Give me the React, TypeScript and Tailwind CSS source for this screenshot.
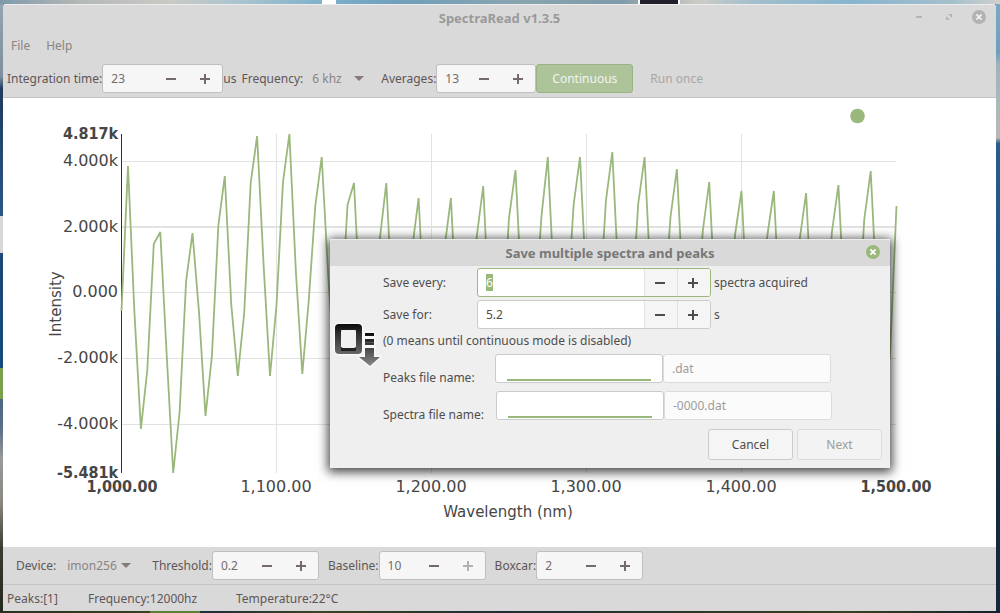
import { useEffect, useRef } from "react";

type SpinProps = {
  id: string;
  value: string;
  width: string;
  maxed?: boolean;
};

function Minus() {
  return (
    <svg width="10" height="10" viewBox="0 0 10 10" aria-hidden="true">
      <rect x="0" y="4" width="10" height="2" fill="currentColor" />
    </svg>
  );
}

function Plus() {
  return (
    <svg width="10" height="10" viewBox="0 0 10 10" aria-hidden="true">
      <path d="M4 0h2v4h4v2H6v4H4V6H0V4h4z" fill="currentColor" />
    </svg>
  );
}

function Arrow() {
  return (
    <svg width="10" height="5" viewBox="0 0 10 5" aria-hidden="true" className="pointer-events-none -ml-[14px] shrink-0">
      <path d="M0 0h10L5 5z" fill="#857b7b" />
    </svg>
  );
}

function Spin({ id, value, width, maxed }: SpinProps) {
  return (
    <div className={`flex h-[29px] shrink-0 overflow-hidden rounded-[3px] border border-[#bfbfbf] bg-[#f6f6f6] ${width}`}>
      <input id={id} type="text" defaultValue={value} className="w-0 min-w-0 flex-1 bg-transparent pl-2 text-[#756a6a] outline-none" />
      <button type="button" aria-label="Decrease" className="flex w-[34px] items-center justify-center text-[#756a6a]">
        <Minus />
      </button>
      <button
        type="button"
        aria-label="Increase"
        disabled={maxed}
        className="flex w-[34px] items-center justify-center text-[#756a6a] disabled:text-[#b5b0b0]"
      >
        <Plus />
      </button>
    </div>
  );
}

function DialogSpin({ id, value, active }: { id: string; value: string; active?: boolean }) {
  const ref = useRef<HTMLInputElement>(null);
  useEffect(() => {
    if (active) {
      ref.current?.focus();
      ref.current?.select();
    }
  }, [active]);
  return (
    <div
      className={`flex h-[29px] w-[234px] overflow-hidden rounded-[3px] border bg-white ${active ? "border-[#9ab87c]" : "border-[#cbcbcb]"}`}
    >
      <input
        ref={ref}
        id={id}
        type="text"
        defaultValue={value}
        className="w-0 min-w-0 flex-1 bg-transparent pl-2 text-[#4d4d4d] outline-none selection:bg-[#9ab87c] selection:text-white"
      />
      <button type="button" aria-label="Decrease" className="flex w-[33px] items-center justify-center border-l border-[#e2e2e2] bg-[#f5f5f5] pr-[2px]">
        <Minus />
      </button>
      <button type="button" aria-label="Increase" className="flex w-[33px] items-center justify-center border-l border-[#e2e2e2] bg-[#f5f5f5] pr-[2px]">
        <Plus />
      </button>
    </div>
  );
}

function CloseIcon({ fill, cross }: { fill: string; cross: string }) {
  return (
    <svg width="14" height="14" viewBox="0 0 14 14" aria-hidden="true">
      <circle cx="7" cy="7" r="7" fill={fill} />
      <path d="M4.4 4.4l5.2 5.2M9.6 4.4l-5.2 5.2" stroke={cross} strokeWidth="1.8" />
    </svg>
  );
}

/* Five samples per fringe, from 1,000 nm to 1,500 nm, as plot heights. */
const SAMPLES = [
  311, 166, 312, 429, 370,
  244, 232, 355, 473, 412,
  281, 233, 312, 416, 356,
  225, 176, 305, 376, 313,
  183, 136, 265, 376, 305,
  182, 134, 272, 374, 300,
  206, 157, 275, 370, 320,
  205, 183, 313, 360, 330,
  239, 183, 313, 360, 340,
  249, 198, 325, 360, 340,
  249, 198, 325, 360, 340,
  237, 186, 320, 360, 330,
  218, 170, 300, 360, 320,
  218, 157, 290, 360, 310,
  205, 157, 290, 360, 310,
  201, 152, 285, 360, 310,
  204, 157, 290, 360, 310,
  217, 169, 300, 360, 320,
  231, 182, 310, 360, 330,
  235, 191, 320, 360, 330,
  236, 191, 320, 360, 330,
  240, 193, 320, 360, 330,
  232, 185, 310, 360, 330,
  220, 171, 300, 400, 355,
  206,
];

const STEP = 775 / 120;
const POINTS = SAMPLES.map((y, i) => `${(121.5 + i * STEP).toFixed(1)},${y}`).join(" ");

const Y_TICKS: [number, string][] = [
  [161, "4.000k"],
  [227, "2.000k"],
  [292, "0.000"],
  [358, "-2.000k"],
  [424, "-4.000k"],
];
const X_TICKS: [number, string][] = [
  [276, "1,100.00"],
  [431, "1,200.00"],
  [586, "1,300.00"],
  [741, "1,400.00"],
];

function Chart() {
  return (
    <svg viewBox="3 98 993 448" className="block h-auto w-full" role="img" aria-label="Spectrum">
      <g fill="#e2e2e2">
        {Y_TICKS.map(([y]) => (
          <rect key={y} x="122" y={y === 227 ? 226 : y} width="774" height={y === 227 ? 2 : 1} />
        ))}
        {X_TICKS.map(([x]) => (
          <rect key={x} x={x} y="134" width="1" height="339" />
        ))}
      </g>
      <rect x="121" y="134" width="1" height="339" fill="#303030" />
      <polyline points={POINTS} fill="none" stroke="#9ab87c" strokeWidth="1.8" strokeLinejoin="bevel" />
      <circle cx="857.5" cy="116" r="7.3" fill="#9ab87c" />
      <g fill="#464646" fontSize="16" className="font-['DejaVu_Sans',sans-serif]">
        {Y_TICKS.map(([y, label]) => (
          <text key={label} x="118" y={y + 5} textAnchor="end">
            {label}
          </text>
        ))}
        {X_TICKS.map(([x, label]) => (
          <text key={label} x={x} y="492" textAnchor="middle">
            {label}
          </text>
        ))}
        <text x="508" y="517" fontSize="15" textAnchor="middle">
          Wavelength (nm)
        </text>
        <text transform="translate(61 304) rotate(-90)" fontSize="15" textAnchor="middle">
          Intensity
        </text>
      </g>
      <g fill="#464646" fontSize="16" fontWeight="700" className="font-['DejaVu_Sans_Condensed','DejaVu_Sans',sans-serif]">
        <text x="118" y="139" textAnchor="end">4.817k</text>
        <text x="118" y="478" textAnchor="end">-5.481k</text>
        <text x="122" y="492" textAnchor="middle">1,000.00</text>
        <text x="896" y="492" textAnchor="middle">1,500.00</text>
      </g>
    </svg>
  );
}

function SaveIcon() {
  return (
    <svg width="48" height="48" viewBox="0 0 48 48" aria-hidden="true">
      <defs>
        <linearGradient id="ink" x1="0" y1="3" x2="0" y2="36" gradientUnits="userSpaceOnUse">
          <stop offset="0" stopColor="#0c0c0c" />
          <stop offset="0.3" stopColor="#2e2e2e" />
          <stop offset="1" stopColor="#707070" />
        </linearGradient>
        <linearGradient id="ink2" x1="0" y1="12" x2="0" y2="45" gradientUnits="userSpaceOnUse">
          <stop offset="0" stopColor="#0c0c0c" />
          <stop offset="1" stopColor="#8a8a8a" />
        </linearGradient>
      </defs>
      <g stroke="#f9f9f9" strokeWidth="3" strokeLinejoin="round" fill="#f9f9f9">
        <rect x="2" y="3" width="27" height="30" rx="4" />
        <path d="M32 12h9v24h6L37 45 26 36h6z" />
      </g>
      <rect x="2" y="3" width="27" height="30" rx="4" fill="url(#ink)" />
      <rect x="8" y="9" width="15" height="21" rx="1" fill="#222" />
      <path d="M8 10q0-1 1-1h13q1 0 1 1v16l-2 1H10l-2-1z" fill="#f1f1f1" />
      <path d="M32 12h9v3h-9zM32 18h9v6h-9zM32 27h9v9h6L37 45 26 36h6z" fill="url(#ink2)" />
      <path d="M32 21h9v1h-9z" fill="#555" />
    </svg>
  );
}

function FileRow({ id, label, suffix, labelWidth }: { id: string; label: string; suffix: string; labelWidth: string }) {
  return (
    <div className="flex h-[29px]">
      <label htmlFor={id} className={`shrink-0 pt-[15px] ${labelWidth}`}>
        {label}
      </label>
      <div className="relative h-[29px] w-[168px]">
        <input id={id} type="text" className="h-full w-full rounded-[3px] border border-[#cbcbcb] bg-white px-2 outline-none" />
        <span className="absolute bottom-[2px] left-3 h-[2px] w-36 bg-[#9ab87c]" />
      </div>
      <input
        type="text"
        aria-label={`${label} suffix`}
        defaultValue={suffix}
        disabled
        className="h-full w-[168px] rounded-[3px] border border-[#dcdcdc] bg-[#fbfbfb] px-2 text-[#9c9c9c]"
      />
    </div>
  );
}

function SaveDialog() {
  return (
    <div
      role="dialog"
      aria-labelledby="dialog-title"
      className="absolute left-[330px] top-[239px] w-[560px] bg-[#efefef] text-[#4d4d4d] shadow-[0_2px_10px_2px_rgba(0,0,0,0.75)]"
    >
      <div className="relative flex h-[27px] items-center justify-center rounded-t-[2px] border-t border-[#ededed] bg-[#d9d9d9]">
        <h2 id="dialog-title" className="text-[13px] font-bold text-[#777]">
          Save multiple spectra and peaks
        </h2>
        <button type="button" aria-label="Close" className="absolute right-[10px] top-[5px]">
          <CloseIcon fill="#9ab87c" cross="#fff" />
        </button>
      </div>
      <div className="flex pb-2 pt-[2px]">
        <div className="flex w-[53px] shrink-0 pl-[3px] pt-[53px]">
          <SaveIcon />
        </div>
        <div className="flex flex-1 flex-col">
          <div className="flex items-center">
            <label htmlFor="every" className="w-[94px]">Save every:</label>
            <DialogSpin id="every" value="6" active />
            <span className="pl-[3px]">spectra acquired</span>
          </div>
          <div className="mt-[3px] flex items-center">
            <label htmlFor="for" className="w-[94px]">Save for:</label>
            <DialogSpin id="for" value="5.2" />
            <span className="pl-[3px]">s</span>
          </div>
          <p className="mt-[3px]">(0 means until continuous mode is disabled)</p>
          <div className="mt-[5px] flex flex-col gap-2">
            <FileRow id="peaks" label="Peaks file name:" suffix=".dat" labelWidth="w-28" />
            <FileRow id="spectra" label="Spectra file name:" suffix="-0000.dat" labelWidth="w-[113px]" />
          </div>
          <div className="mt-[9px] flex justify-end gap-1 pr-2">
            <button type="button" className="h-[31px] w-[85px] rounded-[3px] border border-[#cbcbcb] bg-[#f5f5f5]">
              Cancel
            </button>
            <button type="button" disabled className="h-[31px] w-[85px] rounded-[3px] border border-[#dcdcdc] bg-[#f3f3f3] text-[#9c9c9c]">
              Next
            </button>
          </div>
        </div>
      </div>
    </div>
  );
}

export default function App() {
  return (
    <div className="relative grid min-h-screen grid-cols-[3px_1fr_4px] grid-rows-[4px_1fr_2px] bg-[#2d4c6c] font-['Noto_Sans',sans-serif] text-[12px] leading-[17px]">
      <div className="col-span-3 flex justify-end bg-[linear-gradient(to_right,#7f9aab_0%,#b4b8b6_8%,#c9cac6_17%,#a9c4cf_24%,#7fb2cc_32%,#6f9fba_40%,#8aa4b0_52%,#7f9aa8_62%,#ccccc6_70%,#a4bfcc_75%,#86b4cf_85%,#a4bfcc_95%,#d0d0cb_100%)]">
        <div className="mr-[302px] h-1 w-[14px] bg-white" />
        <div className="mr-[320px] h-1 w-[42px] border-x-2 border-white bg-[#211f29]" />
      </div>
      <div className="bg-[linear-gradient(to_bottom,#93a5ae_0%,#7c8f9c_12%,#1f3a5c_14%,#2b5687_35%,#d8d8d8_35%,#d8d8d8_41%,#1d4777_41%,#16497d_60%,#7ba04c_60%,#7ba04c_65%,#4b6684_65%,#5c7088_70%,#9a9a98_75%,#8b8680_82%,#3a3a30_90%,#23281c_100%)]" />
      <main className="flex min-w-0 flex-col rounded-t-[2px] border-t border-[#ededed] bg-[#d9d9d9] text-[#5f5656]">
        <header className="relative flex h-[27px] items-center justify-center">
          <h1 className="text-[13px] font-bold text-[#9a9a9a]">SpectraRead v1.3.5</h1>
          <div className="absolute right-[10px] top-[5px] flex items-center gap-6">
            <button type="button" aria-label="Minimize" className="h-[2px] w-[6px] bg-[#b4b4b4]" />
            <button type="button" aria-label="Maximize">
              <svg width="6" height="6" viewBox="0 0 6 6" aria-hidden="true">
                <path d="M2 0h4v4zM0 2v4h4z" fill="#b4b4b4" />
              </svg>
            </button>
            <button type="button" aria-label="Close" className="-ml-1">
              <CloseIcon fill="#b2b2b2" cross="#f0f0f0" />
            </button>
          </div>
        </header>
        <nav className="flex h-7 items-center gap-4 px-2 pb-[2px] text-[#8b8383]">
          <button type="button">File</button>
          <button type="button">Help</button>
        </nav>
        <div className="flex h-[38px] items-center whitespace-nowrap border-b border-[#c3c3c3] pl-1">
          <label htmlFor="integration">Integration time:</label>
          <Spin id="integration" value="23" width="w-[121px]" />
          <span>us</span>
          <label htmlFor="frequency" className="pl-[5px]">Frequency:</label>
          <div className="flex items-center pl-[9px]">
            <select id="frequency" className="w-14 appearance-none bg-transparent text-[#8b8383] outline-none">
              <option>6 khz</option>
            </select>
            <Arrow />
          </div>
          <label htmlFor="averages" className="pl-[17px]">Averages:</label>
          <Spin id="averages" value="13" width="w-[100px]" />
          <button type="button" className="h-[29px] w-[97px] rounded-[3px] border border-[#9db287] bg-[#adc39a] text-[#f3f3f3]">
            Continuous
          </button>
          <button type="button" disabled className="px-[17px] text-[#aaa5a5]">
            Run once
          </button>
        </div>
        <section className="flex-1 bg-white">
          <Chart />
        </section>
        <div className="flex h-[38px] items-center whitespace-nowrap border-b border-[#c3c3c3] pl-[13px]">
          <label htmlFor="device">Device:</label>
          <div className="flex items-center pl-[11px]">
            <select id="device" className="w-[68px] appearance-none bg-transparent text-[#8b8383] outline-none">
              <option>imon256</option>
            </select>
            <Arrow />
          </div>
          <label htmlFor="threshold" className="pl-[21px]">Threshold:</label>
          <Spin id="threshold" value="0.2" width="w-[107px]" />
          <label htmlFor="baseline" className="pl-[9px]">Baseline:</label>
          <Spin id="baseline" value="10" width="w-[107px]" maxed />
          <label htmlFor="boxcar" className="pl-[9px]">Boxcar:</label>
          <Spin id="boxcar" value="2" width="w-[107px]" />
        </div>
        <footer className="flex h-[26px] items-center pl-1">
          <span className="w-[81px]">Peaks:[1]</span>
          <span className="w-[148px]">Frequency:12000hz</span>
          <span>Temperature:22°C</span>
        </footer>
      </main>
      <div className="bg-[linear-gradient(to_bottom,#7ba8c4_0%,#6f9fbd_8%,#9fb3bc_10%,#b9bab6_22%,#2b5c8a_23%,#1f5485_45%,#1b3f62_60%,#152e44_75%,#13283a_100%)]" />
      <div className="col-span-3 bg-[linear-gradient(to_right,#2a3120_0%,#39401f_15%,#5b7f35_15%,#5b7f35_20%,#1d2c38_20%,#3b4422_32%,#1f2c33_50%,#39401f_85%,#14202c_100%)]" />
      <SaveDialog />
    </div>
  );
}
